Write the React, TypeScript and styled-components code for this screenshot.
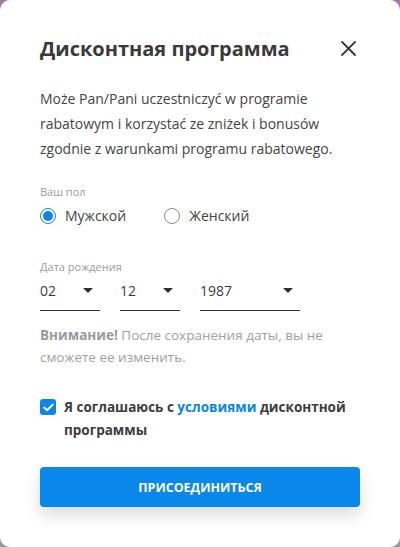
import React, { useState } from 'react'
import styled, { createGlobalStyle } from 'styled-components'

const GlobalStyle = createGlobalStyle`
  html, body {
    margin: 0;
    padding: 0;
    height: 100%;
  }
  body {
    background: linear-gradient(180deg, #a9789a 0%, #8d8aa6 40%, #9a9a9a 100%);
    font-family: 'Open Sans', 'Noto Sans', sans-serif;
  }
  #root {
    height: 100%;
  }
`

const Modal = styled.div`
  box-sizing: border-box;
  width: 400px;
  height: 547px;
  background: #fff;
  border-radius: 10px;
  padding: 34px 40px 0 40px;
  display: flex;
  flex-direction: column;
  color: #3c3c3c;
`

const Header = styled.div`
  display: flex;
  align-items: center;
  justify-content: space-between;
  height: 28px;
`

const Title = styled.h1`
  margin: 0;
  font-size: 20px;
  font-weight: 700;
  color: #3a3a3a;
`

const CloseButton = styled.button`
  border: 0;
  background: none;
  padding: 0;
  margin-right: 3px;
  width: 18px;
  height: 18px;
  display: flex;
  align-items: center;
  justify-content: center;
  cursor: pointer;
`

const Intro = styled.p`
  margin: 24px 0 0 0;
  font-size: 14px;
  line-height: 25px;
  color: #444;
`

const FieldLabel = styled.div<{ $top: number }>`
  margin-top: ${({ $top }) => $top}px;
  font-size: 11px;
  line-height: 14px;
  color: #9c9c9c;
`

const RadioRow = styled.div`
  display: flex;
  align-items: center;
  gap: 38px;
  margin-top: 7px;
`

const RadioOption = styled.label`
  display: flex;
  align-items: center;
  gap: 9px;
  font-size: 14px;
  color: #444;
  cursor: pointer;
`

const RadioCircle = styled.span<{ $checked: boolean }>`
  box-sizing: border-box;
  width: 16px;
  height: 16px;
  border-radius: 50%;
  border: 1.5px solid ${({ $checked }) => ($checked ? '#0a85ea' : '#888')};
  display: flex;
  align-items: center;
  justify-content: center;

  &::after {
    content: '';
    width: 10px;
    height: 10px;
    border-radius: 50%;
    background: ${({ $checked }) => ($checked ? '#0a85ea' : 'transparent')};
  }
`

const SelectRow = styled.div`
  display: flex;
  gap: 20px;
  margin-top: 2px;
`

const Select = styled.div<{ $width: number }>`
  box-sizing: border-box;
  width: ${({ $width }) => $width}px;
  height: 35px;
  padding-bottom: 5px;
  border-bottom: 1px solid #333;
  display: flex;
  align-items: center;
  justify-content: space-between;
  padding-right: 7px;
  font-size: 14px;
  color: #3c3c3c;
`

const Caret = styled.span`
  width: 0;
  height: 0;
  border-left: 5px solid transparent;
  border-right: 5px solid transparent;
  border-top: 5px solid #333;
`

const Warning = styled.p`
  margin: 13px 0 0 0;
  font-size: 13.5px;
  line-height: 22px;
  color: #a0a0a0;

  b {
    font-weight: 700;
    color: #9a9a9a;
  }
`

const AgreeRow = styled.label`
  display: flex;
  align-items: flex-start;
  gap: 8px;
  margin-top: 28px;
  font-size: 13.5px;
  line-height: 23px;
  font-weight: 700;
  color: #3c3c3c;
  cursor: pointer;
`

const CheckBox = styled.span`
  flex: none;
  width: 16px;
  height: 16px;
  margin-top: 3px;
  border-radius: 3px;
  background: #0a85ea;
  display: flex;
  align-items: center;
  justify-content: center;
`

const TermsLink = styled.a`
  color: #0a85ea;
  text-decoration: none;
`

const JoinButton = styled.button`
  margin-top: 25px;
  height: 40px;
  width: 100%;
  border: 0;
  border-radius: 4px;
  background: #0a87eb;
  color: #fff;
  font-family: inherit;
  font-size: 12.5px;
  font-weight: 700;
  box-shadow: 0 8px 16px rgba(0, 0, 0, 0.14);
  cursor: pointer;
`

const App: React.FC = () => {
  const [gender, setGender] = useState<'m' | 'f'>('m')

  return (
    <>
      <GlobalStyle />
      <Modal>
        <Header>
          <Title>Дисконтная программа</Title>
          <CloseButton aria-label="close">
            <svg width="15" height="15" viewBox="0 0 15 15">
              <path d="M1 1 L14 14 M14 1 L1 14" stroke="#333" strokeWidth="1.8" strokeLinecap="square" />
            </svg>
          </CloseButton>
        </Header>
        <Intro>
          Może Pan/Pani uczestniczyć w programie rabatowym i korzystać ze zniżek i bonusów
          zgodnie z warunkami programu rabatowego.
        </Intro>

        <FieldLabel $top={24}>Ваш пол</FieldLabel>
        <RadioRow>
          <RadioOption onClick={() => setGender('m')}>
            <RadioCircle $checked={gender === 'm'} />
            Мужской
          </RadioOption>
          <RadioOption onClick={() => setGender('f')}>
            <RadioCircle $checked={gender === 'f'} />
            Женский
          </RadioOption>
        </RadioRow>

        <FieldLabel $top={35}>Дата рождения</FieldLabel>
        <SelectRow>
          <Select $width={60}>
            02
            <Caret />
          </Select>
          <Select $width={60}>
            12
            <Caret />
          </Select>
          <Select $width={100}>
            1987
            <Caret />
          </Select>
        </SelectRow>

        <Warning>
          <b>Внимание!</b> После сохранения даты, вы не сможете ее изменить.
        </Warning>

        <AgreeRow>
          <CheckBox>
            <svg width="11" height="9" viewBox="0 0 11 9">
              <path d="M1.3 4.6 L4.1 7.3 L9.7 1.6" fill="none" stroke="#fff" strokeWidth="2" strokeLinecap="round" strokeLinejoin="round" />
            </svg>
          </CheckBox>
          <span>
            Я соглашаюсь с <TermsLink href="#">условиями</TermsLink> дисконтной программы
          </span>
        </AgreeRow>

        <JoinButton>ПРИСОЕДИНИТЬСЯ</JoinButton>
      </Modal>
    </>
  )
}

export default App
